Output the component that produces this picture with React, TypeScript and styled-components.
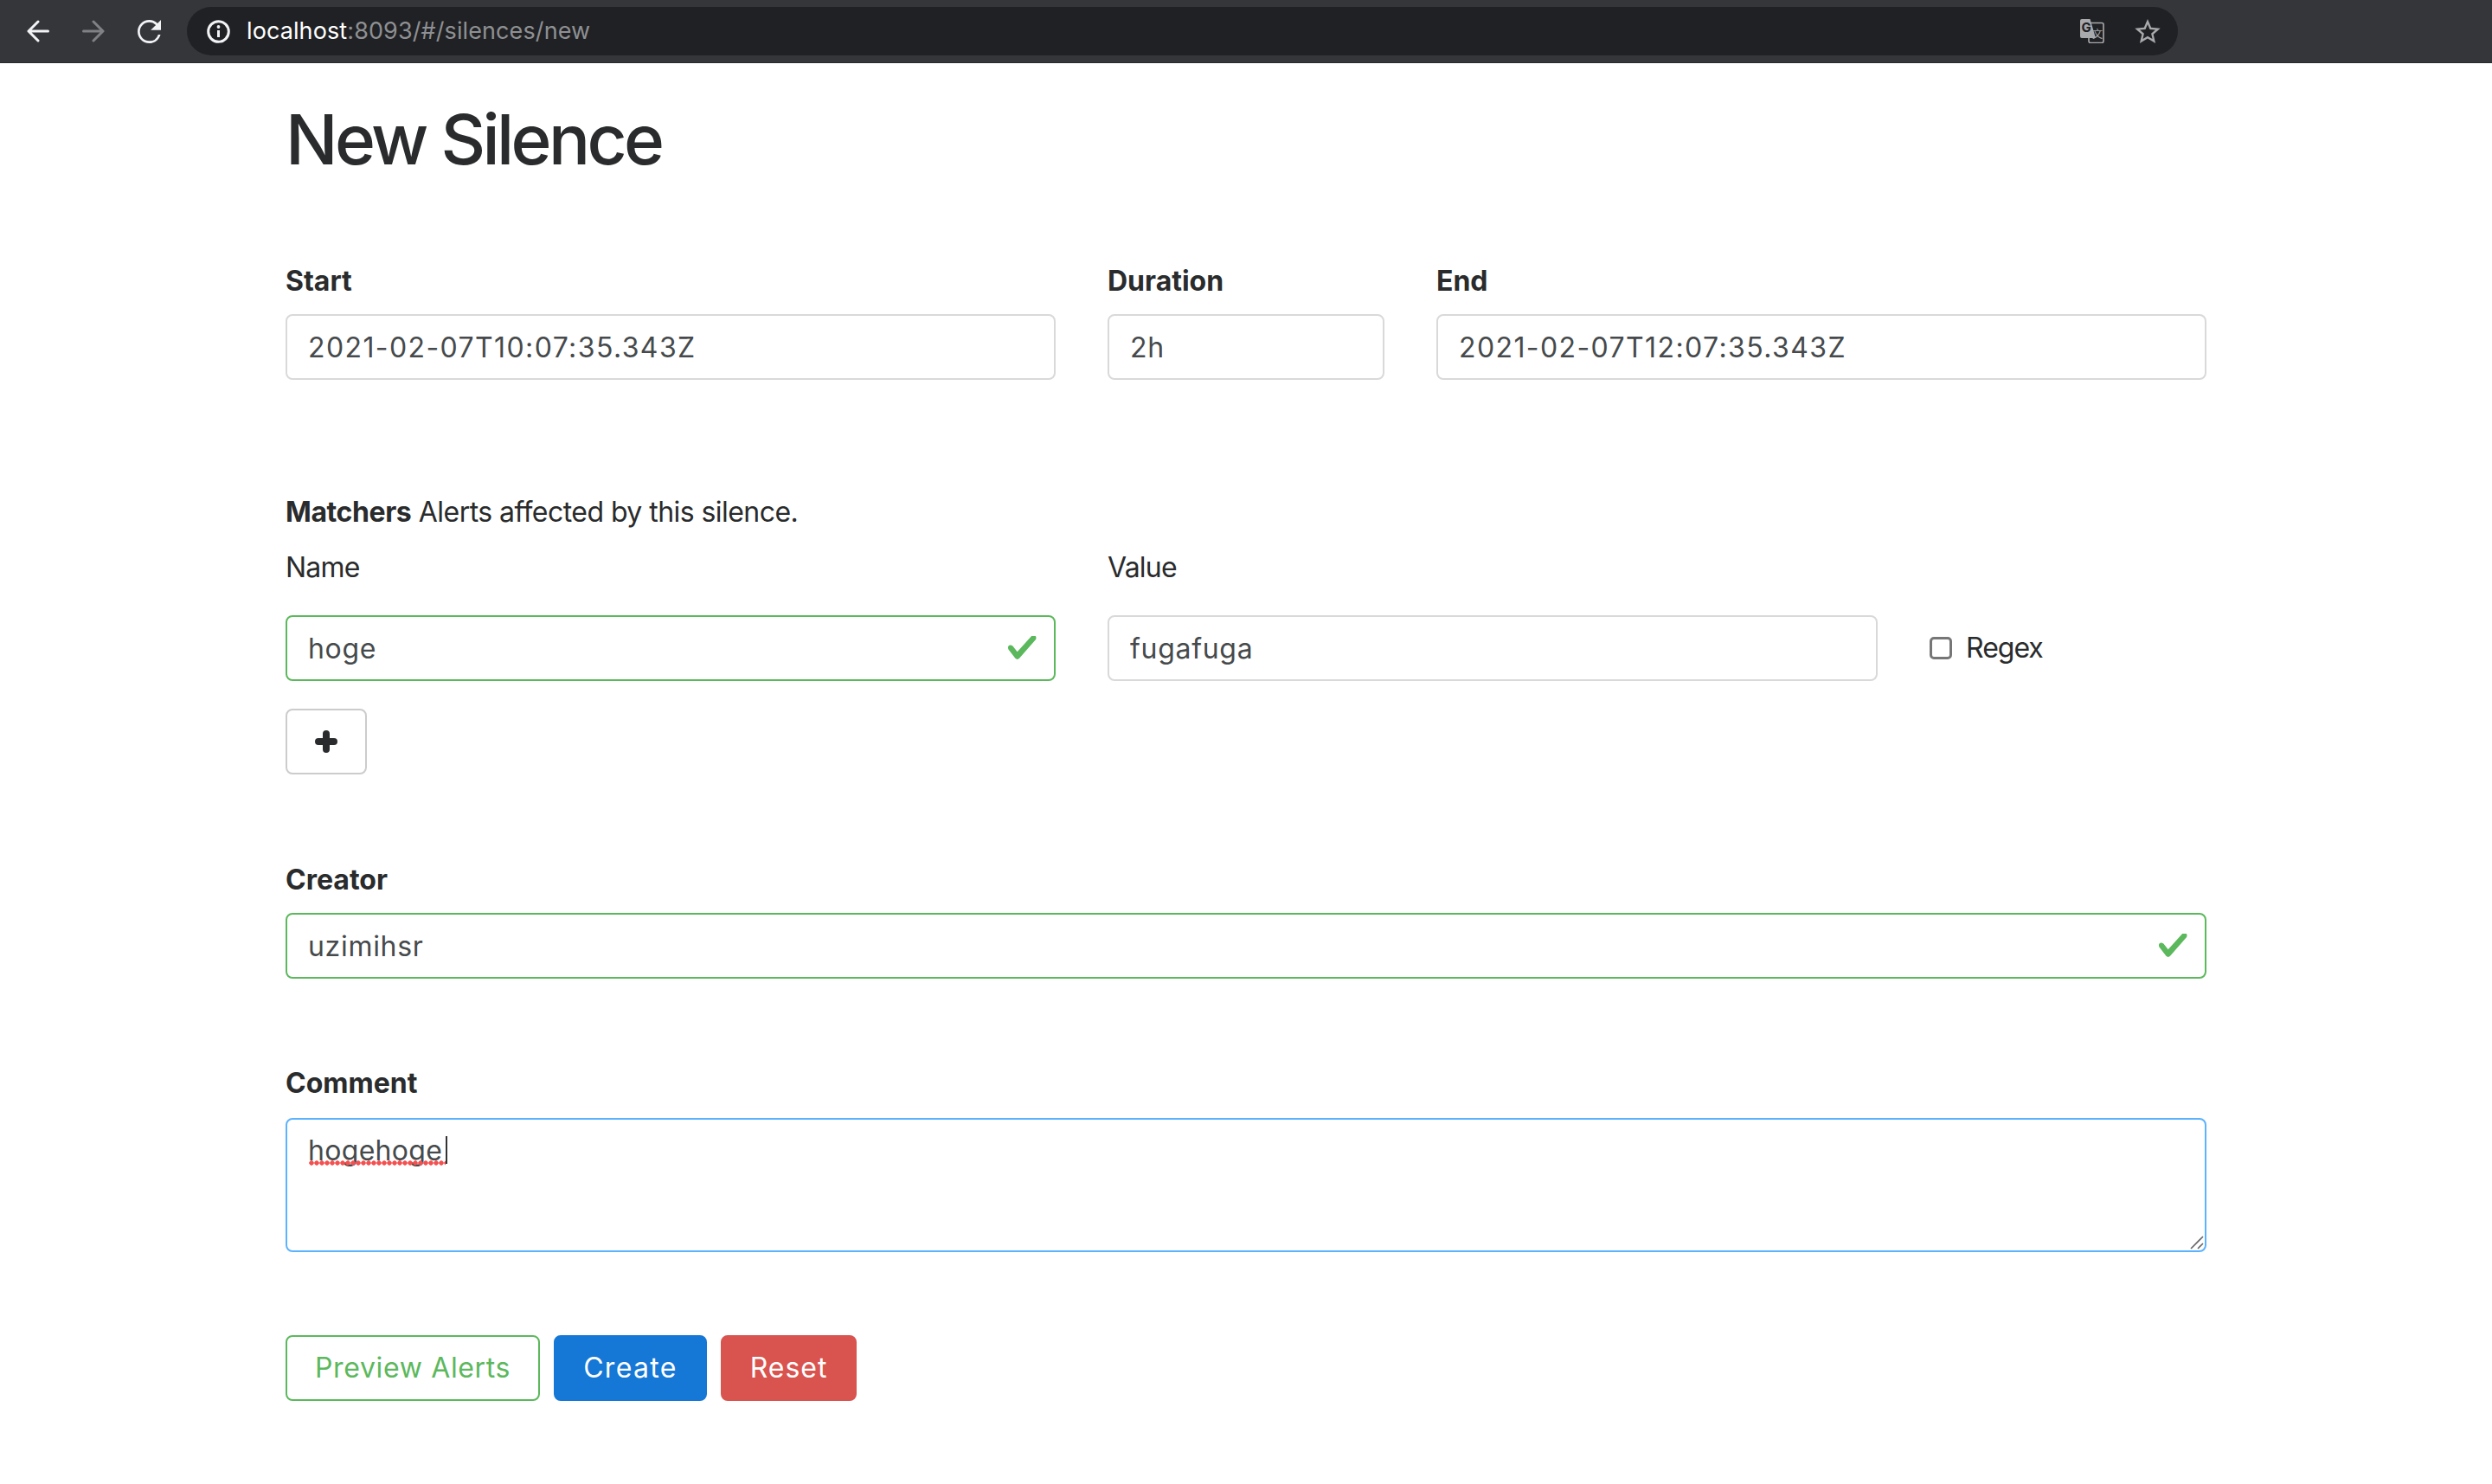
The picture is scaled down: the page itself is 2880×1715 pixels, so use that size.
import React from "react";
import styled, { createGlobalStyle } from "styled-components";

const GlobalStyle = createGlobalStyle`
  html, body {
    margin: 0;
    background: #fff;
  }
  body {
    font-family: Inter, "Liberation Sans", sans-serif;
    font-size: 32px;
    line-height: 48px;
    color: #292b2c;
  }
`;

const Toolbar = styled.header`
  display: flex;
  align-items: center;
  height: 72px;
  padding: 0 363px 0 31px;
  background: #35363a;
  border-bottom: 1px solid #29292c;
`;

const NavIcon = styled.svg<{ $dim?: boolean }>`
  display: block;
  flex: none;
  margin-right: 38px;
  color: ${(p) => (p.$dim ? "#7f8184" : "#f1f3f4")};
`;

const UrlBar = styled.div`
  flex: 1;
  display: flex;
  align-items: center;
  height: 56px;
  margin-left: -8px;
  padding: 0 20px 0 23px;
  border-radius: 28px;
  background: #202124;
`;

const Url = styled.div`
  margin-left: 19px;
  font-size: 27px;
  line-height: 36px;
  letter-spacing: 0.1px;
  color: #fff;
  span {
    color: #8e9093;
  }
`;

const UrlActions = styled.div`
  margin-left: auto;
  display: flex;
  align-items: center;
  gap: 35px;
  color: #a9aaac;
`;

const Main = styled.main`
  width: 2220px;
  margin: 0 auto;
`;

const Title = styled.h1`
  margin: 44px 0 96px;
  font-size: 80px;
  line-height: 88px;
  font-weight: 500;
  letter-spacing: -3.6px;
  color: #292b2c;
`;

const FieldLabel = styled.label<{ $tight?: boolean }>`
  display: block;
  margin-bottom: ${(p) => (p.$tight ? 14 : 16)}px;
  font-weight: 700;
`;

const DateRow = styled.div`
  display: grid;
  grid-template-columns: 890px 320px 890px;
  column-gap: 60px;
`;

const MatchersTitle = styled.div`
  margin-top: 129px;
  margin-bottom: 16px;
  letter-spacing: -0.55px;
  b {
    font-weight: 700;
    letter-spacing: -0.4px;
  }
`;

const MatcherGrid = styled.div`
  display: grid;
  grid-template-columns: 890px 890px 320px;
  column-gap: 60px;
  row-gap: 31px;
  align-items: center;
`;

const MatcherHead = styled.div`
  letter-spacing: -0.8px;
`;

const InputWrap = styled.div`
  position: relative;
`;

const Input = styled.input<{ $valid?: boolean; $wide?: boolean }>`
  display: block;
  box-sizing: border-box;
  width: 100%;
  height: 76px;
  padding: 0 24px;
  border: 2px solid ${(p) => (p.$valid ? "#5cb85c" : "#d9d9d9")};
  border-radius: 8px;
  outline: none;
  background: #fff;
  font: inherit;
  letter-spacing: ${(p) => (p.$wide ? "1.4px" : "0.7px")};
  color: #464a4c;
`;

const CheckMark = styled.svg`
  position: absolute;
  top: 24px;
  right: 22px;
  width: 33px;
  height: 28px;
  fill: #5cb85c;
`;

const RegexLabel = styled.label`
  display: flex;
  align-items: center;
  gap: 16px;
  letter-spacing: -1px;
`;

const RegexBox = styled.input`
  appearance: none;
  box-sizing: border-box;
  flex: none;
  width: 26px;
  height: 26px;
  margin: 0;
  border: 3px solid #767676;
  border-radius: 5px;
  background: #fff;
`;

const AddButton = styled.button`
  display: flex;
  align-items: center;
  justify-content: center;
  box-sizing: border-box;
  width: 94px;
  height: 76px;
  margin-top: 32px;
  padding: 0;
  border: 2px solid #ccc;
  border-radius: 8px;
  background: #fff;
  color: #292b2c;
`;

const Section = styled.section<{ $gap?: number }>`
  margin-top: ${(p) => p.$gap ?? 96}px;
`;

const TextArea = styled.textarea`
  display: block;
  box-sizing: border-box;
  width: 100%;
  height: 155px;
  padding: 12px 24px;
  border: 2px solid #5cb3fd;
  border-radius: 8px;
  outline: none;
  resize: none;
  font: inherit;
  letter-spacing: 0.3px;
  color: #464a4c;
`;

const Squiggle = styled.span`
  position: absolute;
  left: 27px;
  top: 49px;
  width: 158px;
  height: 6px;
  background-image: radial-gradient(circle at 3px 3px, #f4504f 2.4px, transparent 3px);
  background-size: 6px 6px;
  background-repeat: repeat-x;
`;

const Caret = styled.span`
  position: absolute;
  left: 185px;
  top: 21px;
  width: 2px;
  height: 32px;
  background: #333;
`;

const Grip = styled.svg`
  position: absolute;
  right: 3px;
  bottom: 3px;
  width: 16px;
  height: 16px;
  stroke: #666;
  stroke-width: 1.6;
  fill: none;
`;

const Actions = styled.div`
  display: flex;
  gap: 16px;
  margin-top: 96px;
`;

const colors = {
  outline: { bg: "#fff", border: "#5cb85c", text: "#5cb85c", tracking: 0.65 },
  primary: { bg: "#1577d6", border: "#1577d6", text: "#fff", tracking: 1.3 },
  danger: { bg: "#d9534f", border: "#d9534f", text: "#fff", tracking: 1 },
};

const ActionButton = styled.button<{ $kind: keyof typeof colors }>`
  box-sizing: border-box;
  height: 76px;
  padding: 0 32px;
  border: 2px solid ${(p) => colors[p.$kind].border};
  border-radius: 8px;
  background: ${(p) => colors[p.$kind].bg};
  color: ${(p) => colors[p.$kind].text};
  font: inherit;
  letter-spacing: ${(p) => colors[p.$kind].tracking}px;
`;

const Check = () => (
  <CheckMark viewBox="0.5 1.2 7.1 6">
    <path d="M2.3 6.73L.6 4.53c-.4-1.04.46-1.4 1.1-.8l1.1 1.4 3.4-3.8c.6-.63 1.6-.27 1.2.7l-4 4.6c-.43.5-.8.4-1.1.1z" />
  </CheckMark>
);

const App = () => {
  return (
    <>
      <GlobalStyle />
      <Toolbar>
        <NavIcon width="26" height="26" viewBox="0 0 26 26" fill="none" stroke="currentColor" strokeWidth="3" strokeLinecap="round" strokeLinejoin="round">
          <path d="M24.5 13H2M13 2L2 13l11 11" />
        </NavIcon>
        <NavIcon $dim width="26" height="26" viewBox="0 0 26 26" fill="none" stroke="currentColor" strokeWidth="3" strokeLinecap="round" strokeLinejoin="round">
          <path d="M1.5 13H24M13 2l11 11-11 11" />
        </NavIcon>
        <NavIcon width="27" height="27" viewBox="4 4 16 16" fill="currentColor">
          <path d="M17.65 6.35A7.958 7.958 0 0 0 12 4c-4.42 0-7.99 3.58-7.99 8s3.57 8 7.99 8c3.73 0 6.84-2.55 7.73-6h-1.6A6.5 6.5 0 0 1 12 18.4c-3.53 0-6.4-2.87-6.4-6.4S8.47 5.6 12 5.6c1.77 0 3.35.74 4.5 1.9L13 11h7V4l-2.35 2.35z" />
        </NavIcon>
        <UrlBar>
          <svg width="27" height="27" viewBox="0 0 27 27" fill="none" stroke="#f1f3f4" strokeWidth="3">
            <circle cx="13.5" cy="13.5" r="11.8" />
            <path d="M13.5 12v8" />
            <circle cx="13.5" cy="8" r="1.9" fill="#f1f3f4" stroke="none" />
          </svg>
          <Url>
            localhost<span>:8093/#/silences/new</span>
          </Url>
          <UrlActions>
            <svg width="28" height="28" viewBox="0 0 28 28">
              <rect x="10" y="4.5" width="17" height="23" rx="2" fill="none" stroke="currentColor" strokeWidth="1.6" />
              <path d="M2 0h9.5L18 22H2a2 2 0 0 1-2-2V2a2 2 0 0 1 2-2z" fill="currentColor" />
              <text x="1.5" y="15" fontSize="15" fontWeight="700" fill="#202124" fontFamily="Inter, sans-serif">G</text>
              <text x="14" y="22" fontSize="12" fill="currentColor" fontFamily="'Noto Sans CJK SC', sans-serif">文</text>
            </svg>
            <svg width="30" height="28" viewBox="2 2 20 19" fill="currentColor">
              <path d="M22 9.24l-7.19-.62L12 2 9.19 8.63 2 9.24l5.46 4.73L5.82 21 12 17.27 18.18 21l-1.63-7.03L22 9.24zM12 15.4l-3.76 2.27 1-4.28-3.32-2.88 4.38-.38L12 6.1l1.71 4.04 4.38.38-3.32 2.88 1 4.28L12 15.4z" />
            </svg>
          </UrlActions>
        </UrlBar>
      </Toolbar>
      <Main>
        <Title>New Silence</Title>
        <DateRow>
          <div>
            <FieldLabel $tight>Start</FieldLabel>
            <Input $wide readOnly value="2021-02-07T10:07:35.343Z" />
          </div>
          <div>
            <FieldLabel $tight>Duration</FieldLabel>
            <Input readOnly value="2h" />
          </div>
          <div>
            <FieldLabel $tight>End</FieldLabel>
            <Input $wide readOnly value="2021-02-07T12:07:35.343Z" />
          </div>
        </DateRow>

        <MatchersTitle>
          <b>Matchers</b> Alerts affected by this silence.
        </MatchersTitle>
        <MatcherGrid>
          <MatcherHead>Name</MatcherHead>
          <MatcherHead>Value</MatcherHead>
          <div />
          <InputWrap>
            <Input $valid readOnly value="hoge" />
            <Check />
          </InputWrap>
          <Input readOnly value="fugafuga" />
          <RegexLabel>
            <RegexBox type="checkbox" />
            Regex
          </RegexLabel>
        </MatcherGrid>
        <AddButton>
          <svg width="26" height="26" viewBox="0 0 26 26" fill="none" stroke="currentColor" strokeWidth="8" strokeLinecap="round">
            <path d="M4 13h18M13 4v18" />
          </svg>
        </AddButton>

        <Section $gap={98}>
          <FieldLabel $tight>Creator</FieldLabel>
          <InputWrap>
            <Input $valid readOnly value="uzimihsr" />
            <Check />
          </InputWrap>
        </Section>

        <Section $gap={97}>
          <FieldLabel>Comment</FieldLabel>
          <InputWrap>
            <TextArea readOnly spellCheck={false} value="hogehoge" />
            <Squiggle />
            <Caret />
            <Grip viewBox="0 0 16 16">
              <path d="M1 15L15 1M9 15l6-6" />
            </Grip>
          </InputWrap>
        </Section>

        <Actions>
          <ActionButton $kind="outline">Preview Alerts</ActionButton>
          <ActionButton $kind="primary">Create</ActionButton>
          <ActionButton $kind="danger">Reset</ActionButton>
        </Actions>
      </Main>
    </>
  );
};

export default App;
